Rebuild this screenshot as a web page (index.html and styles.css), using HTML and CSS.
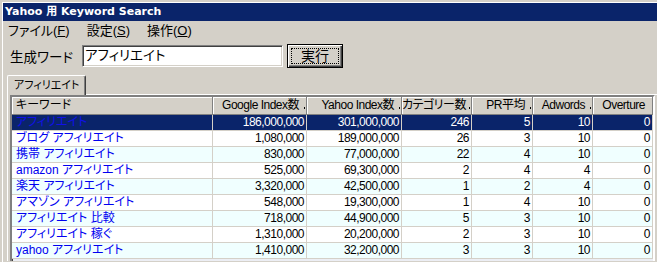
FILE: index.html
```html
<!DOCTYPE html>
<html lang="ja">
<head>
    <meta charset="UTF-8">
    <title>Yahoo 用 Keyword Search</title>
    <link rel="stylesheet" href="styles.css">
</head>
<body>
    <div class="window">
        <div class="titlebar">Yahoo 用 Keyword Search</div>
        <div class="menubar">
            <span class="menu">ファイル(<u>F</u>)</span>
            <span class="menu">設定(<u>S</u>)</span>
            <span class="menu">操作(<u>O</u>)</span>
        </div>

        <div class="search-row">
            <label class="search-label">生成ワード</label>
            <div class="textbox">アフィリエイト</div>
            <button type="button" class="btn"><span class="btn-focus">実行</span></button>
        </div>

        <div class="tabs">
            <div class="tab">アフィリエイト</div>
        </div>
        <div class="tab-panel">
            <div class="grid">
                <table class="result-table">
                    <colgroup>
                        <col style="width:201px">
                        <col style="width:94px">
                        <col style="width:95px">
                        <col style="width:70px">
                        <col style="width:61px">
                        <col style="width:60px">
                        <col style="width:60px">
                    </colgroup>
                    <thead>
                        <tr>
                            <th class="col-key">キーワード</th>
                            <th class="cut">Google Index数</th>
                            <th class="cut">Yahoo Index数</th>
                            <th class="cut">カテゴリー数</th>
                            <th class="cut">PR平均</th>
                            <th class="cut">Adwords</th>
                            <th>Overture</th>
                        </tr>
                    </thead>
                    <tbody>
                        <tr class="selected">
                            <td class="kw">アフィリエイト</td><td>186,000,000</td><td>301,000,000</td><td>246</td><td>5</td><td>10</td><td>0</td>
                        </tr>
                        <tr>
                            <td class="kw">ブログ アフィリエイト</td><td>1,080,000</td><td>189,000,000</td><td>26</td><td>3</td><td>10</td><td>0</td>
                        </tr>
                        <tr class="alt">
                            <td class="kw">携帯 アフィリエイト</td><td>830,000</td><td>77,000,000</td><td>22</td><td>4</td><td>10</td><td>0</td>
                        </tr>
                        <tr>
                            <td class="kw">amazon アフィリエイト</td><td>525,000</td><td>69,300,000</td><td>2</td><td>4</td><td>4</td><td>0</td>
                        </tr>
                        <tr class="alt">
                            <td class="kw">楽天 アフィリエイト</td><td>3,320,000</td><td>42,500,000</td><td>1</td><td>2</td><td>4</td><td>0</td>
                        </tr>
                        <tr>
                            <td class="kw">アマゾン アフィリエイト</td><td>548,000</td><td>19,300,000</td><td>1</td><td>4</td><td>10</td><td>0</td>
                        </tr>
                        <tr class="alt">
                            <td class="kw">アフィリエイト 比較</td><td>718,000</td><td>44,900,000</td><td>5</td><td>3</td><td>10</td><td>0</td>
                        </tr>
                        <tr>
                            <td class="kw">アフィリエイト 稼ぐ</td><td>1,310,000</td><td>20,200,000</td><td>2</td><td>3</td><td>10</td><td>0</td>
                        </tr>
                        <tr class="alt">
                            <td class="kw">yahoo アフィリエイト</td><td>1,410,000</td><td>32,200,000</td><td>3</td><td>3</td><td>10</td><td>0</td>
                        </tr>
                    </tbody>
                </table>
            </div>
        </div>
    </div>
</body>
</html>
```

FILE: styles.css
```css
html, body {
    margin: 0;
    height: 262px;
    overflow: hidden;
}

body {
    background: #d4d0c8;
    padding: 2px 0 0 2px;
    box-sizing: border-box;
    font-family: 'Liberation Sans', 'Noto Sans CJK JP', sans-serif;
    font-feature-settings: 'palt';
    font-size: 12px;
    color: #000;
}

.window {
    border-top: 1px solid #fff;
    border-left: 1px solid #fff;
    height: 259px;
    overflow: hidden;
}

.titlebar {
    height: 18px;
    line-height: 18px;
    padding-left: 2px;
    background: #0a246a;
    color: #fff;
    font-family: 'DejaVu Sans', 'Noto Sans CJK JP', sans-serif;
    font-weight: bold;
    font-size: 11px;
}

.menubar {
    height: 19px;
    line-height: 19px;
    padding-left: 5px;
    display: flex;
    gap: 17px;
    font-size: 13px;
}

.search-row {
    display: flex;
    align-items: center;
    margin-top: 4px;
    height: 24px;
    padding-left: 7px;
    font-size: 13.5px;
}

.search-label {
    width: 72px;
}

.textbox {
    width: 201px;
    height: 22px;
    box-sizing: border-box;
    background: #fff;
    border: 1px solid;
    border-color: #808080 #fff #fff #808080;
    box-shadow: inset 1px 1px #404040, inset -1px -1px #d4d0c8;
    padding-left: 2px;
    line-height: 20px;
}

.btn {
    margin-left: 4px;
    width: 56px;
    height: 24px;
    padding: 3px;
    background: #d4d0c8;
    border: 1px solid #000;
    box-shadow: inset 1px 1px #fff, inset -1px -1px #404040, inset -2px -2px #808080;
    font-family: inherit;
    font-size: 14px;
    display: flex;
}

.btn-focus {
    flex: 1;
    border: 1px dotted #000;
    line-height: 15px;
    text-align: center;
}

.tabs {
    margin: 7px 0 0 4px;
    display: flex;
}

.tab {
    position: relative;
    z-index: 1;
    height: 19px;
    line-height: 19px;
    padding: 0 6px 0 6px;
    background: #d4d0c8;
    border-top: 1px solid #fff;
    border-left: 1px solid #fff;
    border-right: 1px solid #404040;
    box-shadow: inset -1px 0 #808080;
    border-radius: 2px 2px 0 0;
    margin-bottom: -1px;
    white-space: nowrap;
    font-size: 11px;
}

.tab-panel {
    margin-left: 4px;
    border-top: 1px solid #fff;
    border-left: 1px solid #fff;
    padding-left: 2px;
    height: 166px;
}

.grid {
    width: 641px;
    height: 164px;
    overflow: hidden;
    background: #eceef4;
    border: 2px solid;
    border-bottom: 0;
    border-color: #808080 #fff #fff #808080;
    box-shadow: inset 1px 1px #404040;
}

.result-table {
    table-layout: fixed;
    width: 641px;
    border-spacing: 0;
    font-size: 12px;
    letter-spacing: -0.5px;
}

.result-table th {
    height: 17px;
    line-height: 17px;
    padding: 0 7px 0 0;
    font-weight: normal;
    text-align: right;
    white-space: nowrap;
    overflow: hidden;
    background: #d4d0c8;
    border-right: 1px solid #808080;
    border-bottom: 1px solid #808080;
    box-shadow: inset 1px 1px #fff;
}

.result-table th.col-key {
    text-align: left;
    padding-left: 4px;
    letter-spacing: 0;
}

.result-table th.cut {
    background: #d4d0c8 linear-gradient(#000, #000) no-repeat right 1px bottom 5px / 1px 2px;
}

.result-table td {
    height: 15px;
    line-height: 15px;
    padding: 0 2px 0 0;
    text-align: right;
    white-space: nowrap;
    overflow: hidden;
    background: #fff;
    border-right: 1px solid #d4d0c8;
    border-bottom: 1px solid #d4d0c8;
}

.result-table td.kw {
    text-align: left;
    padding-left: 4px;
    letter-spacing: 0;
    color: #0000f0;
}

.result-table tr.alt td {
    background: #f0ffff;
}

.result-table tr.selected td {
    background: #0a246a;
    color: #fff;
}

.result-table tr.selected td.kw {
    color: #1010e8;
}
```
